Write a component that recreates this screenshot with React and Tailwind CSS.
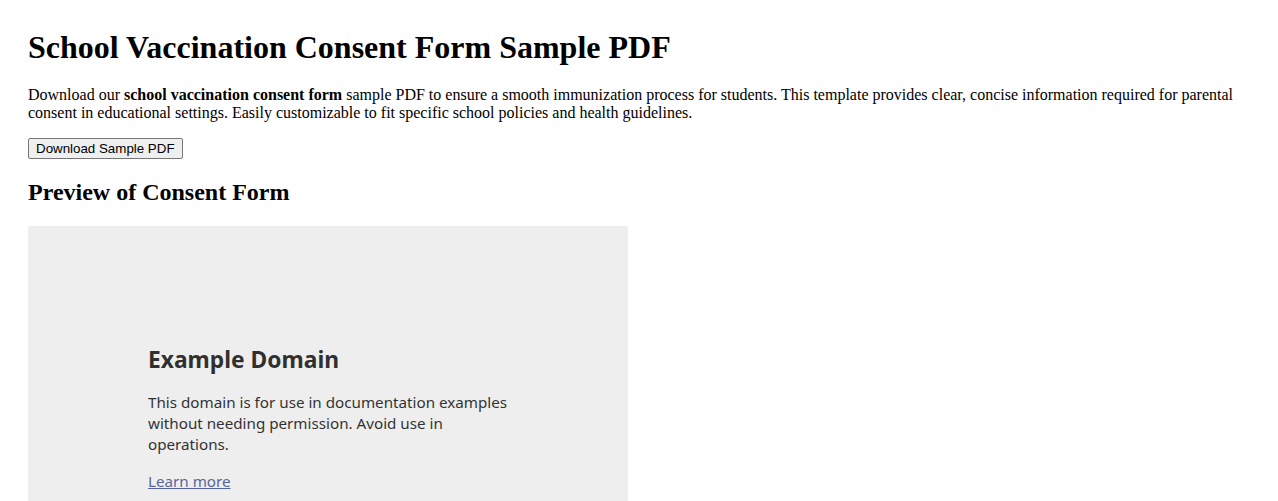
import React from 'react';

const App = () => {
    return (
        <div className="min-h-screen bg-white px-[28px] pt-[8px] text-black" style={{ fontFamily: '"Liberation Serif", "Times New Roman", serif' }}>
            {/* Title */}
            <h1 className="mt-[21px] mb-[21px] text-[32px] font-bold leading-[36px]">
                School Vaccination Consent Form Sample PDF
            </h1>

            <p className="mb-[16px] text-[16px] leading-[18px]">
                Download our <strong className="font-bold">school vaccination consent form</strong> sample PDF to ensure a smooth immunization process for students. This template provides clear, concise information required for parental consent in educational settings. Easily customizable to fit specific school policies and health guidelines.
            </p>

            <button
                className="block h-[21px] rounded-[2px] border border-[#767676] bg-[#efefef] px-[7px] text-[13.33px] leading-[15px] text-black"
                style={{ fontFamily: '"Liberation Sans", Arial, sans-serif' }}
            >
                Download Sample PDF
            </button>

            {/* Preview */}
            <h2 className="mt-[20px] mb-[20px] text-[24px] font-bold leading-[27px]">
                Preview of Consent Form
            </h2>

            <div className="h-[400px] w-[600px] overflow-hidden bg-[#eeeeee]" style={{ fontFamily: '"Noto Sans", "Open Sans", sans-serif' }}>
                <div className="ml-[120px] w-[360px] pt-[118px] text-black opacity-80">
                    <h3 className="text-[22.8px] font-bold leading-[32px]">Example Domain</h3>
                    <p className="mt-[16px] text-[15.2px] leading-[21px]">
                        This domain is for use in documentation examples without needing permission. Avoid use in operations.
                    </p>
                    <p className="mt-[16px] text-[15.2px] leading-[21px]">
                        <a href="#" className="text-[#334488] underline">Learn more</a>
                    </p>
                </div>
            </div>
        </div>
    );
};

export default App;
